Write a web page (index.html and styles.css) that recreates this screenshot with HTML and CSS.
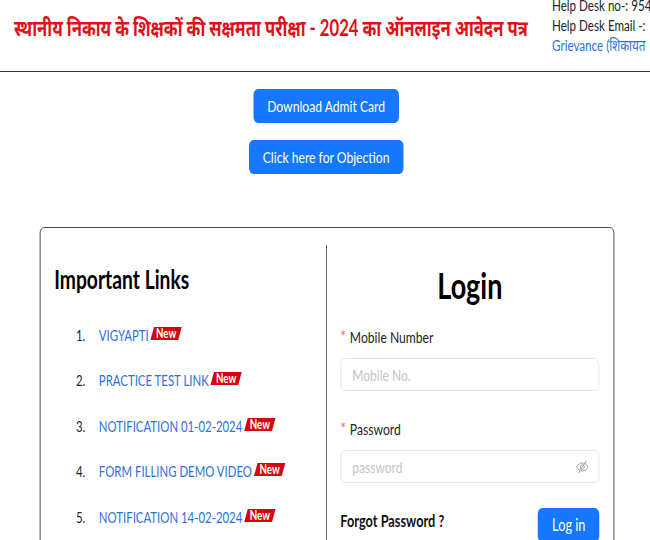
FILE: index.html
```html
<!DOCTYPE html>
<html lang="en">
<head>
    <meta charset="UTF-8">
    <meta name="viewport" content="width=device-width, initial-scale=1.0">
    <title>Login</title>
    <link rel="stylesheet" href="styles.css">
</head>
<body>
    <div class="page">
        <div class="header">
            <h1 class="title">स्थानीय निकाय के शिक्षकों की सक्षमता परीक्षा - 2024 का ऑनलाइन आवेदन पत्र</h1>
            <div class="help">
                <p>Help Desk no-: 954</p>
                <p>Help Desk Email -:</p>
                <a href="#">Grievance (शिकायत</a>
            </div>
        </div>

        <div class="actions">
            <a class="btn" href="#">Download Admit Card</a>
            <a class="btn" href="#">Click here for Objection</a>
        </div>

        <div class="card">
            <div class="links">
                <h2>Important Links</h2>
                <ol>
                    <li><a href="#">VIGYAPTI</a><span class="new"><span>New</span></span></li>
                    <li><a href="#">PRACTICE TEST LINK</a><span class="new"><span>New</span></span></li>
                    <li><a href="#">NOTIFICATION 01-02-2024</a><span class="new"><span>New</span></span></li>
                    <li><a href="#">FORM FILLING DEMO VIDEO</a><span class="new"><span>New</span></span></li>
                    <li><a href="#">NOTIFICATION 14-02-2024</a><span class="new"><span>New</span></span></li>
                </ol>
            </div>
            <form class="login">
                <h2>Login</h2>
                <label class="label" for="mobile">Mobile Number</label>
                <div class="field"><input id="mobile" type="text" placeholder="Mobile No."></div>
                <label class="label" for="password">Password</label>
                <div class="field">
                    <input id="password" type="password" placeholder="password">
                    <svg class="eye" width="17" height="14" viewBox="0 0 14 14" fill="none" stroke="#999" stroke-width="1" preserveAspectRatio="none">
                        <path d="M0.8 7C2.2 4.4 4.4 3 7 3s4.800 1.400 6.200 4c-1.400 2.600-3.600 4-6.200 4S2.200 9.600 0.800 7z"/>
                        <circle cx="7" cy="7" r="2.200"/>
                        <path d="M11.500 0.800L2.500 13.200"/>
                    </svg>
                </div>
                <div class="login-foot">
                    <a class="forgot" href="#">Forgot Password ?</a>
                    <button class="btn" type="button">Log in</button>
                </div>
            </form>
        </div>
    </div>
</body>
</html>
```

FILE: styles.css
```css
* {
    margin: 0;
    padding: 0;
    box-sizing: border-box;
}

html, body {
    height: 540px;
    overflow: hidden;
}

body {
    font-family: 'Lato', 'Noto Sans', sans-serif;
    font-size: 15.2px;
    color: #212529;
    background: #fff;
}

.page {
    width: 866.67px;
    height: 540px;
    transform: scaleX(0.75);
    transform-origin: 0 0;
}

a {
    color: #2f6fde;
    text-decoration: none;
}

.header {
    display: flex;
    height: 72px;
    border-bottom: 1px solid #333;
    padding-left: 18.5px;
    overflow: hidden;
}

.title {
    flex: none;
    width: 717.5px;
    padding-top: 12px;
    font-size: 22.2px;
    line-height: 32px;
    font-weight: 700;
    color: #e20f17;
    white-space: nowrap;
}

.help {
    flex: none;
    font-size: 15.5px;
    line-height: 20px;
    margin-top: -5px;
    white-space: nowrap;
}

.actions {
    display: flex;
    flex-direction: column;
    align-items: center;
    gap: 17px;
    padding: 17px 0 0 3px;
}

.btn {
    display: inline-block;
    background: #1677ff;
    color: #fff;
    border: 0;
    border-radius: 6px;
    font-family: inherit;
    font-size: 16.2px;
    line-height: 34px;
    padding: 0 18.7px;
}

.card {
    display: flex;
    width: 765.5px;
    height: 340px;
    margin: 53px 0 0 53.3px;
    border: 1px solid #333;
    border-radius: 6px;
    padding: 17px 0;
}

.links {
    width: 382px;
    border-right: 1px solid #333;
    padding: 15px 0 0 18px;
}

.links h2 {
    font-size: 25.7px;
    line-height: 38px;
    color: #000;
}

.links ol {
    list-style: none;
    counter-reset: item;
    margin-top: 14px;
}

.links li {
    counter-increment: item;
    display: flex;
    align-items: center;
    height: 45.5px;
    padding-left: 59.5px;
    position: relative;
    white-space: nowrap;
}

.links li::before {
    content: counter(item) ".";
    position: absolute;
    left: 29px;
}

.new {
    display: inline-block;
    margin-left: 5px;
    margin-top: -3px;
    background: #d9020f;
    color: #fff;
    font-size: 13px;
    font-weight: 700;
    line-height: 13px;
    padding: 0 5px;
    transform: skewX(-20deg);
}

.new span {
    display: inline-block;
    transform: skewX(20deg);
}

.login {
    flex: 1;
    padding: 0 18.5px 0 17.5px;
}

.login h2 {
    font-size: 36px;
    line-height: 42px;
    text-align: center;
    color: #000;
    margin: 19px 0 19px;
}

.label {
    display: block;
    font-size: 16.2px;
    line-height: 22px;
    margin-bottom: 10px;
}

.label::before {
    content: "*";
    font-size: 18px;
    color: #f5686a;
    margin-right: 5px;
}

.field {
    position: relative;
    margin-bottom: 26px;
}

.field input {
    display: block;
    width: 100%;
    height: 33px;
    border: 1px solid #e3e3e3;
    border-radius: 6px;
    padding: 0 15px;
    font-family: inherit;
    font-size: 16px;
    outline: 0;
}

.field input::placeholder {
    color: #c4c4c4;
}

.eye {
    position: absolute;
    right: 14px;
    top: 10px;
}

.login-foot {
    display: flex;
    justify-content: space-between;
    align-items: center;
    margin-top: -1px;
}

.forgot {
    font-size: 17px;
    font-weight: 700;
    color: #111;
    margin-bottom: 10px;
}

.login-foot .btn {
    font-size: 17px;
}
```
